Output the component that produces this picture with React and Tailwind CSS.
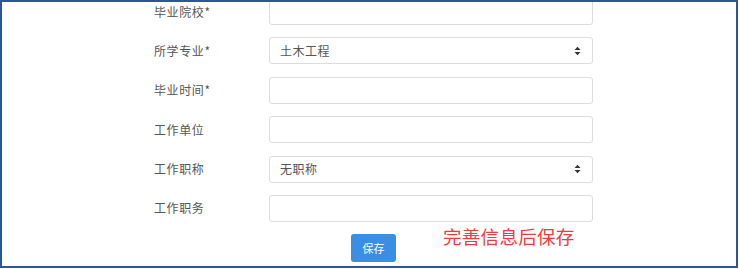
const cjk = { fontFamily: '"Noto Sans CJK SC", "Noto Sans", sans-serif' };

const rows = [
  { label: "毕业院校*", type: "input" },
  { label: "所学专业*", type: "select", value: "土木工程" },
  { label: "毕业时间*", type: "input" },
  { label: "工作单位", type: "input" },
  { label: "工作职称", type: "select", value: "无职称" },
  { label: "工作职务", type: "input" },
];

// small up/down caret used by the selects
const Caret = () => (
  <svg width="7" height="10" viewBox="0 0 7 10" className="absolute right-[11px] top-1/2 -translate-y-1/2">
    <path d="M0.5 4L3.5 0.8L6.5 4Z" fill="#333" />
    <path d="M0.5 6L3.5 9.2L6.5 6Z" fill="#333" />
  </svg>
);

export default function App() {
  return (
    <div className="w-[739px] h-[269px] bg-white" style={cjk}>
      <div className="w-[738px] h-[268px] border-2 border-[#2d5597] overflow-hidden">
        <div className="flex flex-col gap-[12.4px] -mt-[4px]">
          {rows.map((row) => (
            <div key={row.label} className="flex items-center h-[27px]">
              <div className="w-[267px] pl-[152px] text-[12px] text-[#555] tracking-[0.6px]">
                {row.label}
              </div>
              <div className="relative w-[324px] h-[27px] border border-[#dcdcdc] rounded-[3px] bg-white flex items-center pl-[10px] text-[12px] text-[#555] tracking-[0.5px]">
                {row.value}
                {row.type === "select" && <Caret />}
              </div>
            </div>
          ))}
        </div>

        {/* save button + hint */}
        <div className="flex items-start mt-[12px] pl-[349px]">
          <button className="w-[45px] h-[28px] rounded-[3px] bg-[#3a8ee4] text-white text-[11px] flex items-center justify-center">
            保存
          </button>
          <span className="ml-[47px] -mt-[7px] text-[18.5px] leading-[18px] text-[#ee3b40] tracking-[0.3px] whitespace-nowrap">
            完善信息后保存
          </span>
        </div>
      </div>
    </div>
  );
}
